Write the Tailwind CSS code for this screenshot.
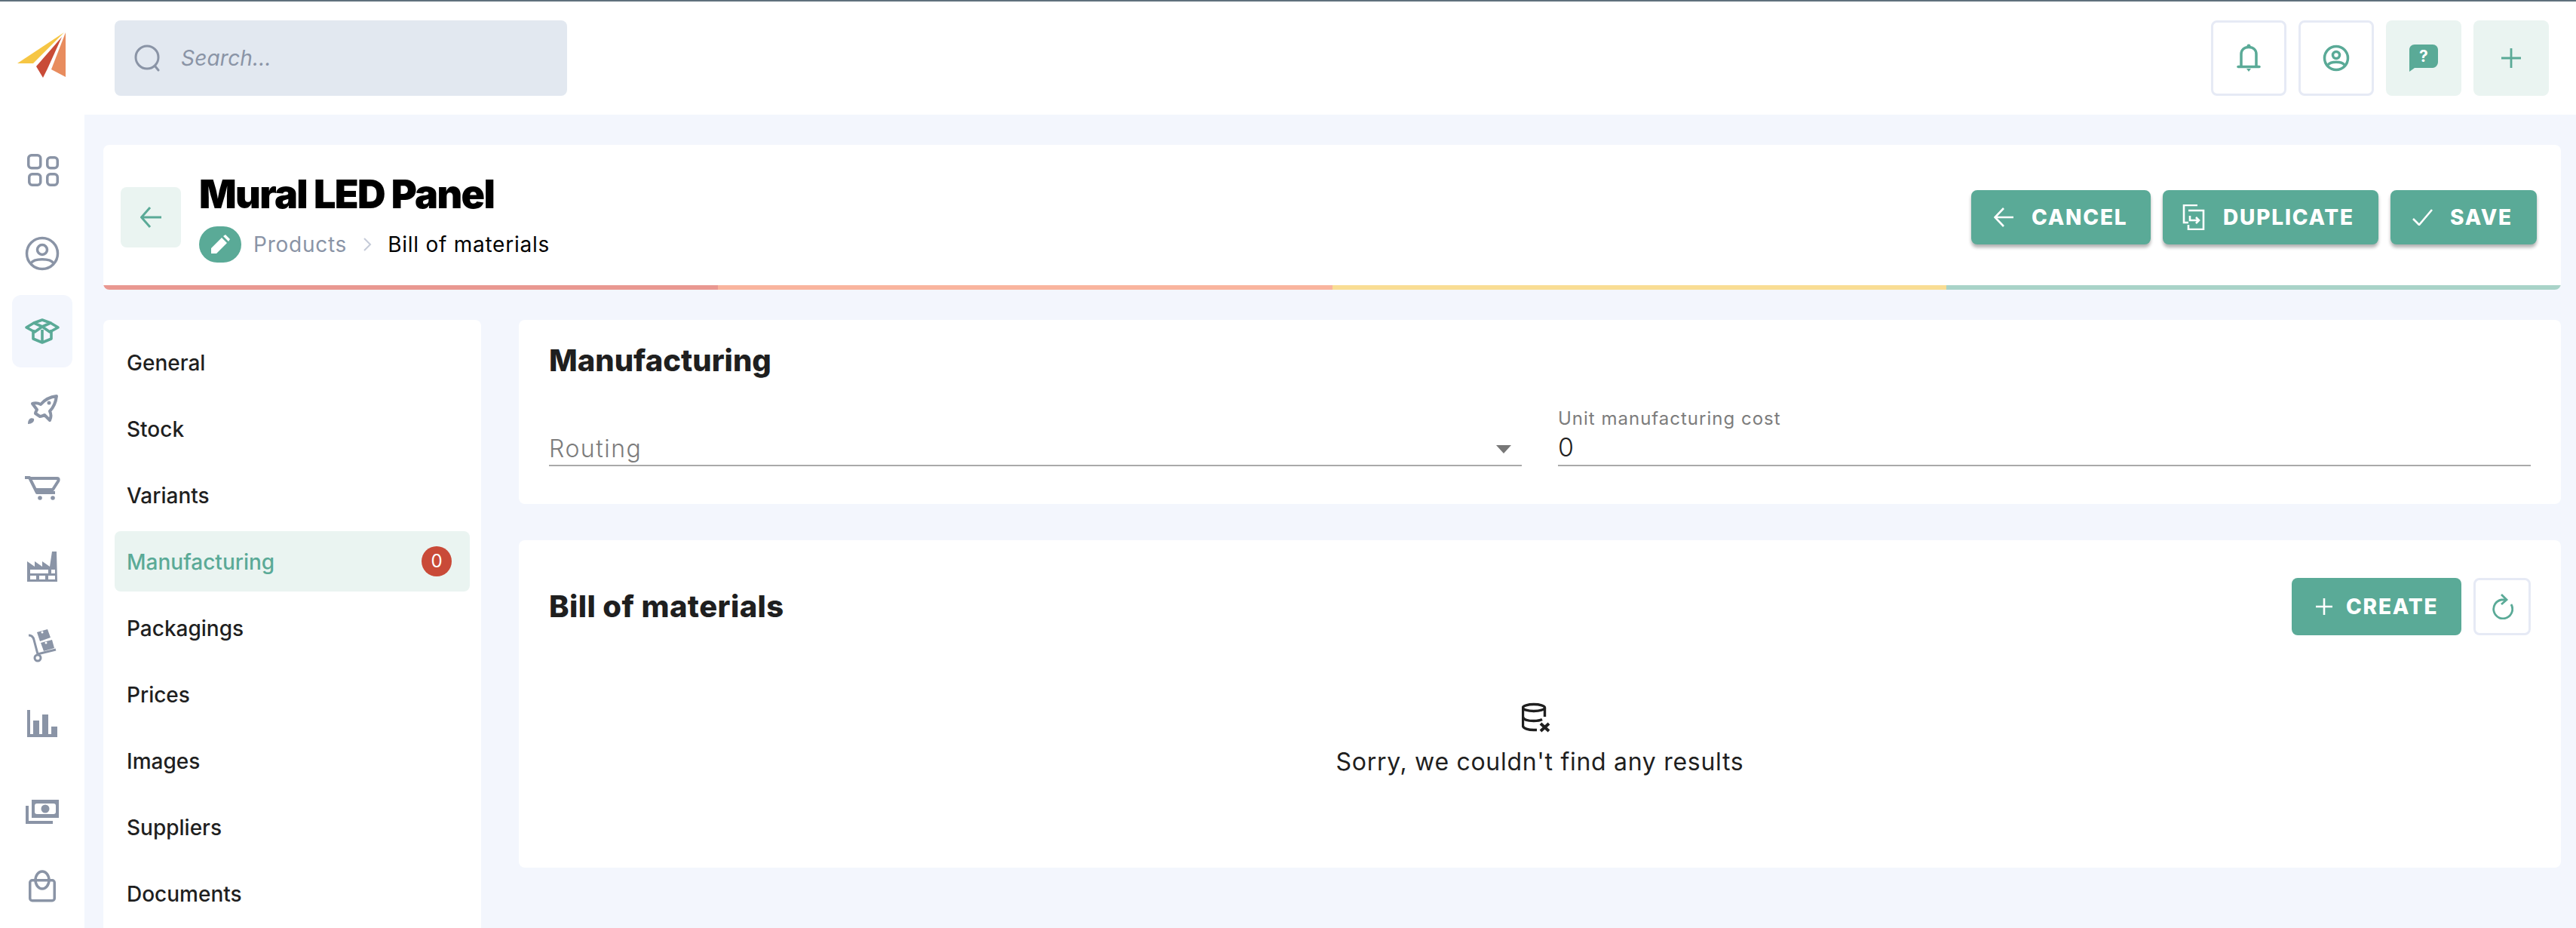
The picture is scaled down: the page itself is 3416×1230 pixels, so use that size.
<!DOCTYPE html>
<html lang="en">
<head>
    <meta charset="UTF-8">
    <title>Mural LED Panel</title>
    <script src="https://cdn.jsdelivr.net/npm/@tailwindcss/browser@4"></script>
</head>
<body class="h-[1230px] overflow-hidden bg-white font-[family-name:Inter,sans-serif] text-[#1f1f1f]">
    <!-- top bar -->
    <header class="h-[152px] border-t-2 border-[#5f707c] flex items-start">
        <div class="w-[112px] h-[150px] shrink-0">
            <svg width="112" height="150" viewBox="0 2 112 150">
                <polygon points="85,43 23,84 44,84" fill="#f6c644"/>
                <polygon points="82,49 48,88 57,103 63,91" fill="#c94b37"/>
                <polygon points="87,43 68,92 87,102" fill="#e88c5e"/>
            </svg>
        </div>
        <div class="flex-1 flex items-center justify-between mt-[25px] pl-[40px] pr-[36px]">
            <div class="w-[600px] h-[100px] bg-[#e2e8f0] rounded-lg flex items-center pl-[26px]">
                <svg class="w-[36px] h-[36px] mr-[26px] shrink-0" viewBox="0 0 36 36" fill="none" stroke="#8a94a6" stroke-width="3"><circle cx="17" cy="17" r="15"/><path d="M27.5 28.5L32 34" stroke-linecap="round"/></svg>
                <input class="flex-1 bg-transparent outline-none text-[28px] italic tracking-[0.2px] placeholder:text-[#8a94a6] placeholder:italic" placeholder="Search...">
            </div>
            <div class="flex gap-4">
                <button class="w-[100px] h-[100px] rounded-lg border-[3px] border-[#e6eaf5] flex items-center justify-center">
                    <svg width="34" height="38" viewBox="0 0 34 38" fill="none" stroke="#5aaa97" stroke-width="3.500"><path d="M7 29V14C7 8 11 4.500 17 4.500S27 8 27 14V29"/><path d="M3 30.500H31" stroke-linecap="round"/><circle cx="17" cy="3" r="2.500" fill="#5aaa97" stroke="none"/><path d="M14 33H20L17 37Z" fill="#5aaa97" stroke="none"/></svg>
                </button>
                <button class="w-[100px] h-[100px] rounded-lg border-[3px] border-[#e6eaf5] flex items-center justify-center">
                    <svg width="36" height="36" viewBox="0 0 36 36" fill="none" stroke="#5aaa97" stroke-width="3.500"><circle cx="18" cy="18" r="15.500"/><circle cx="18" cy="14" r="4.500"/><path d="M7 27C11 22 25 22 29 27"/></svg>
                </button>
                <button class="w-[100px] h-[100px] rounded-lg bg-[#eaf4f1] flex items-center justify-center">
                    <svg width="40" height="36" viewBox="0 0 40 36"><path d="M8 0H32C36 0 39 3 39 7V23C39 27 36 31 32 31H8L1 36V7C1 3 4 0 8 0Z" fill="#5aaa97"/><text x="20" y="23" text-anchor="middle" fill="#fff" font-size="21" font-weight="700" font-family="Inter">?</text></svg>
                </button>
                <button class="w-[100px] h-[100px] rounded-lg bg-[#eaf4f1] flex items-center justify-center">
                    <svg width="26" height="26" viewBox="0 0 26 26" stroke="#5aaa97" stroke-width="2.800"><path d="M13 0V26M0 13H26"/></svg>
                </button>
            </div>
        </div>
    </header>

    <div class="flex h-[1078px]">
        <!-- left rail -->
        <nav class="w-[112px] shrink-0 pt-[32px] flex flex-col items-center gap-2 overflow-hidden">
            <a class="w-[80px] h-[96px] shrink-0 flex items-center justify-center">
                <svg class="mb-[12px]" width="48" height="48" viewBox="0 0 48 48" fill="none" stroke="#8a94a6" stroke-width="3.500"><rect x="5.750" y="3.750" width="16" height="17" rx="4"/><rect x="30.750" y="6.750" width="13.500" height="14" rx="4"/><rect x="6.750" y="28.750" width="15" height="14.500" rx="4"/><rect x="30.750" y="28.750" width="13.500" height="14.500" rx="4"/></svg>
            </a>
            <a class="w-[80px] h-[96px] shrink-0 flex items-center justify-center">
                <svg width="48" height="48" viewBox="0 0 48 48" fill="none" stroke="#8a94a6" stroke-width="3.500"><circle cx="24" cy="24" r="20.500"/><circle cx="24" cy="19" r="6.500"/><path d="M9 37C13 30 35 30 39 37"/></svg>
            </a>
            <a class="w-[80px] h-[96px] shrink-0 -mt-[1px] rounded-xl bg-[#f3f6fd] flex items-center justify-center">
                <svg width="48" height="48" viewBox="0 0 48 48" fill="none" stroke="#5aaa97" stroke-width="3.600" stroke-linejoin="round"><path d="M12 22V34L24 39L36 34V22"/><path d="M24 22V39"/><path d="M24 9L13 13L24 18L35 13Z"/><path d="M13 13L3 19L14 25L24 18L34 25L45 19L35 13"/></svg>
            </a>
            <a class="w-[80px] h-[96px] shrink-0 flex items-center justify-center">
                <svg width="48" height="48" viewBox="0 0 48 48" fill="none" stroke="#8a94a6" stroke-width="4" stroke-linejoin="round"><path d="M43 6C34 7 27 11 22 17C18 15 14 15 11 16L17 24C16 26 15 27 15 29L21 33C23 33 25 32 27 31L34 38C36 34 36 30 34 26C39 21 42 14 43 6Z"/><circle cx="33" cy="15" r="2.500" fill="#8a94a6" stroke="none"/><path d="M5 43C5 36 9 34 13 36C14 40 10 43 5 43Z" fill="#8a94a6" stroke="none"/></svg>
            </a>
            <a class="w-[80px] h-[96px] shrink-0 flex items-center justify-center">
                <svg width="48" height="48" viewBox="0 0 48 48" fill="none" stroke="#8a94a6" stroke-width="4" stroke-linejoin="round"><path d="M1 10H7L17 30H41"/><path d="M9 11H44C46 11 46 13 45 15L38 26H15"/><circle cx="21" cy="37" r="2.800" fill="#8a94a6" stroke="none"/><circle cx="38" cy="37" r="2.800" fill="#8a94a6" stroke="none"/></svg>
            </a>
            <a class="w-[80px] h-[96px] shrink-0 flex items-center justify-center">
                <svg width="48" height="48" viewBox="0 0 48 48"><path d="M4 44V17L14 24V17L24 24V17L34 24L37 4H43L44 44Z" fill="#8a94a6"/><path d="M8 28H32V33H8ZM36 28H41V33H36ZM8 36H16V41H8ZM20 36H28V41H20ZM32 36H41V41H32Z" fill="#fff"/></svg>
            </a>
            <a class="w-[80px] h-[96px] shrink-0 flex items-center justify-center">
                <svg width="48" height="48" viewBox="0 0 48 48"><path d="M6 11C10 11 12 13 13 17L18 36L42 30" fill="none" stroke="#8a94a6" stroke-width="3"/><circle cx="18" cy="41" r="4" fill="none" stroke="#8a94a6" stroke-width="3"/><polygon points="17,7 31,3 35,14 21,19" fill="#8a94a6"/><polygon points="22,21 37,17 40,28 26,32" fill="#8a94a6"/><circle cx="24" cy="7" r="1.500" fill="#fff"/><circle cx="29" cy="21" r="1.500" fill="#fff"/></svg>
            </a>
            <a class="w-[80px] h-[96px] shrink-0 flex items-center justify-center">
                <svg width="48" height="48" viewBox="0 0 48 48" fill="#8a94a6"><rect x="4" y="6" width="4" height="36"/><rect x="12" y="20" width="8" height="22"/><rect x="24" y="12" width="8" height="30"/><rect x="36" y="28" width="8" height="14"/><rect x="4" y="38" width="40" height="4"/></svg>
            </a>
            <a class="w-[80px] h-[96px] shrink-0 mt-[12px] flex items-center justify-center">
                <svg width="48" height="48" viewBox="0 0 48 48"><rect x="10" y="9" width="36" height="24" fill="#8a94a6"/><rect x="14" y="14" width="28" height="14" rx="3" fill="#fff"/><circle cx="28" cy="21" r="5.500" fill="#8a94a6"/><path d="M2 17H6V37H38V41H2Z" fill="#8a94a6"/></svg>
            </a>
            <a class="w-[80px] h-[96px] shrink-0 -mt-[4px] flex items-center justify-center">
                <svg width="48" height="48" viewBox="0 0 48 48" fill="none" stroke="#8a94a6" stroke-width="3.500"><ellipse cx="24" cy="15.500" rx="9" ry="11.500"/><rect x="7.750" y="15.750" width="32.500" height="27" rx="3" fill="none"/></svg>
            </a>
        </nav>

        <main class="flex-1 min-w-0 bg-[#f3f6fd] pt-[40px] pl-[25px] pr-[20px] overflow-hidden">
            <!-- record header -->
            <section class="h-[192px] bg-white rounded-lg overflow-hidden flex flex-col">
                <div class="flex-1 flex items-center pt-[6px] pl-[23px] pr-[32px]">
                    <button class="w-[80px] h-[80px] rounded-lg bg-[#eaf4f1] flex items-center justify-center">
                        <svg width="28" height="28" viewBox="0 0 28 28" fill="none" stroke="#5aaa97" stroke-width="3"><path d="M28 14H2M13 1L1.500 14L13 27"/></svg>
                    </button>
                    <div class="ml-[24px]">
                        <h1 class="text-[52px] leading-[60px] font-black text-black tracking-[-1.6px]">Mural LED Panel</h1>
                        <div class="mt-[12px] h-[48px] flex items-center text-[28px] tracking-[0.75px]">
                            <span class="w-[56px] h-[48px] rounded-full bg-[#5aaa97] flex items-center justify-center mr-[16px]">
                                <svg width="26" height="26" viewBox="0 0 26 26" fill="#fff"><path d="M1 25V18L15 4L22 11L8 25ZM17 2L20 0L26 6L24 9Z"/></svg>
                            </span>
                            <span class="text-[#8a94a6]">Products</span>
                            <svg class="mx-[20px]" width="14" height="20" viewBox="0 0 14 20" fill="none" stroke="#c5cbd8" stroke-width="2"><path d="M3 2L11 10L3 18"/></svg>
                            <span class="text-black">Bill of materials</span>
                        </div>
                    </div>
                    <div class="ml-auto flex gap-4">
                        <button class="w-[238px] h-[72px] rounded-lg bg-[#5aaa97] text-white shadow-[0_4px_4px_rgba(0,0,0,0.3)] flex items-center pl-[30px] text-[28px] font-extrabold tracking-[1.8px]">
                            <svg class="mr-[24px]" width="26" height="26" viewBox="0 0 26 26" fill="none" stroke="#fff" stroke-width="2.600"><path d="M26 13H2M13 1L1.500 13L13 25"/></svg>CANCEL
                        </button>
                        <button class="w-[286px] h-[72px] rounded-lg bg-[#5aaa97] text-white shadow-[0_4px_4px_rgba(0,0,0,0.3)] flex items-center pl-[26px] text-[28px] font-extrabold tracking-[1.8px]">
                            <svg class="mr-[24px]" width="30" height="34" viewBox="0 0 30 34" fill="none" stroke="#fff" stroke-width="2.600"><path d="M20 1H2V24H8"/><path d="M8 8H28V33H8V27"/><path d="M10 15V21H22M18 17L22 21L18 25"/></svg>DUPLICATE
                        </button>
                        <button class="w-[194px] h-[72px] rounded-lg bg-[#5aaa97] text-white shadow-[0_4px_4px_rgba(0,0,0,0.3)] flex items-center pl-[29px] text-[28px] font-extrabold tracking-[1.8px]">
                            <svg class="mr-[23px]" width="27" height="22" viewBox="0 0 27 22" fill="none" stroke="#fff" stroke-width="2.600"><path d="M1 13L9 21L26 1"/></svg>SAVE
                        </button>
                    </div>
                </div>
                <div class="h-[6px] flex">
                    <div class="flex-1 bg-[#e99891]"></div>
                    <div class="flex-1 bg-[#f9b49e]"></div>
                    <div class="flex-1 bg-[#f9dd94]"></div>
                    <div class="flex-1 bg-[#a9d3c8]"></div>
                </div>
            </section>

            <div class="mt-[40px] flex gap-[50px]">
                <!-- tabs -->
                <aside class="w-[501px] h-[900px] shrink-0 bg-white rounded-lg px-[15px] pt-[16px] flex flex-col gap-2 text-[28px] font-medium">
                    <a class="h-[80px] rounded-lg px-[16px] pt-[2px] flex items-center">General</a>
                    <a class="h-[80px] rounded-lg px-[16px] pt-[2px] flex items-center">Stock</a>
                    <a class="h-[80px] rounded-lg px-[16px] pt-[2px] flex items-center">Variants</a>
                    <a class="h-[80px] rounded-lg px-[16px] pt-[2px] flex items-center justify-between bg-[#eaf4f1] text-[#5aaa97]">Manufacturing
                        <span class="w-[40px] h-[40px] mr-[8px] -mt-[2px] rounded-full bg-[#c94a38] text-white text-[24px] font-normal flex items-center justify-center">0</span>
                    </a>
                    <a class="h-[80px] rounded-lg px-[16px] pt-[2px] flex items-center">Packagings</a>
                    <a class="h-[80px] rounded-lg px-[16px] pt-[2px] flex items-center">Prices</a>
                    <a class="h-[80px] rounded-lg px-[16px] pt-[2px] flex items-center">Images</a>
                    <a class="h-[80px] rounded-lg px-[16px] pt-[2px] flex items-center">Suppliers</a>
                    <a class="h-[80px] rounded-lg px-[16px] pt-[2px] flex items-center">Documents</a>
                </aside>

                <div class="flex-1 min-w-0 flex flex-col gap-[48px]">
                    <section class="h-[244px] bg-white rounded-lg pt-[24px] px-[40px]">
                        <h2 class="text-[40px] leading-[60px] font-extrabold">Manufacturing</h2>
                        <div class="mt-[33px] grid grid-cols-2 gap-[48px]">
                            <div class="h-[77px] border-b-2 border-[#a9a9a9] flex items-end justify-between">
                                <span class="text-[32px] leading-[42px] font-light text-[#7c7c7c] tracking-[1.5px]">Routing</span>
                                <svg class="mb-[15px] mr-[14px]" width="20" height="11" viewBox="0 0 20 11" fill="#777"><path d="M0 0H20L10 11Z"/></svg>
                            </div>
                            <div class="h-[77px] border-b-2 border-[#a9a9a9]">
                                <label class="block text-[24px] leading-[28px] text-[#7c7c7c] tracking-[1px]">Unit manufacturing cost</label>
                                <div class="text-[34px] leading-[47px] font-light">0</div>
                            </div>
                        </div>
                    </section>

                    <section class="h-[434px] bg-white rounded-lg pt-[50px] px-[40px]">
                        <div class="flex items-center justify-between">
                            <h2 class="text-[40px] leading-[60px] font-extrabold tracking-[0.4px]">Bill of materials</h2>
                            <div class="flex gap-4">
                                <button class="w-[225px] h-[76px] rounded-lg bg-[#5aaa97] text-white flex items-center pl-[32px] text-[28px] font-extrabold tracking-[1.8px]">
                                    <svg class="mr-[18px]" width="22" height="22" viewBox="0 0 22 22" stroke="#fff" stroke-width="2.600"><path d="M11 0V22M0 11H22"/></svg>CREATE
                                </button>
                                <button class="w-[76px] h-[76px] rounded-lg border-[3px] border-[#e6eaf5] flex items-center justify-center">
                                    <svg width="30" height="34" viewBox="0 0 30 34" fill="none" stroke="#5aaa97" stroke-width="2.800"><path d="M27 14A12.500 12.500 0 1 1 14 8H20"/><path d="M14 1L21 8L14 14"/></svg>
                                </button>
                            </div>
                        </div>
                        <div class="mt-[84px] flex flex-col items-center">
                            <svg width="48" height="48" viewBox="0 0 48 48" fill="none" stroke="#1f1f1f" stroke-width="3.400"><ellipse cx="16" cy="12" rx="14.500" ry="4.500"/><path d="M1.500 12V36C1.500 39.500 9 41.500 16 41.500H20"/><path d="M1.500 24C1.500 28 9 29.500 16 29.500C20 29.500 24 29 27 27.500"/><path d="M30.500 12V24"/><path d="M25 33L36 43M36 33L25 43" stroke-width="4"/></svg>
                            <p class="mt-[12px] text-[32px] leading-[48px] tracking-[0.7px]">Sorry, we couldn't find any results</p>
                        </div>
                    </section>
                </div>
            </div>
        </main>
    </div>
</body>
</html>
